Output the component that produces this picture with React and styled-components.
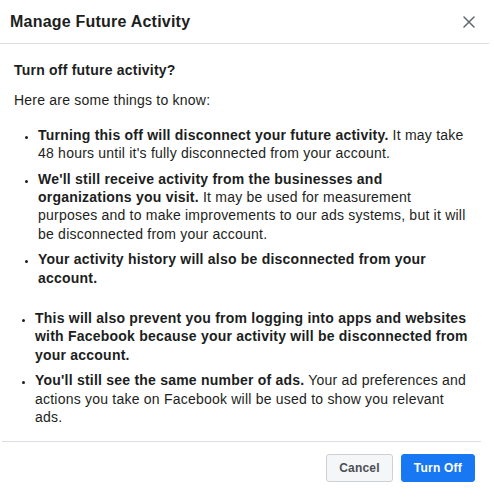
import React from 'react'
import styled, { createGlobalStyle } from 'styled-components'

const GlobalStyle = createGlobalStyle`
	html, body {
		margin: 0;
		padding: 0;
		background: #fff;
	}
	body {
		font-family: 'Liberation Sans', Arial, Helvetica, sans-serif;
		color: #1c1e21;
		letter-spacing: 0.22px;
	}
`

// each item is a list of lines, each line a list of [bold, text] pieces
const items = [
	[
		[['Turning this off will disconnect your future activity.', ' It may take']],
		[['', "48 hours until it's fully disconnected from your account."]],
	],
	[
		[["We'll still receive activity from the businesses and", '']],
		[['organizations you visit.', ' It may be used for measurement']],
		[['', 'purposes and to make improvements to our ads systems, but it will']],
		[['', 'be disconnected from your account.']],
	],
	[
		[['Your activity history will also be disconnected from your', '']],
		[['account.', '']],
	],
]

const moreItems = [
	[
		[['This will also prevent you from logging into apps and websites', '']],
		[['with Facebook because your activity will be disconnected from', '']],
		[['your account.', '']],
	],
	[
		[["You'll still see the same number of ads.", ' Your ad preferences and']],
		[['', 'actions you take on Facebook will be used to show you relevant']],
		[['', 'ads.']],
	],
]

function CloseIcon() {
	return (
		<svg width='12' height='12' viewBox='0 0 12 12'>
			<path
				d='M1 1 L11 11 M11 1 L1 11'
				stroke='#606770'
				strokeWidth='1.5'
				strokeLinecap='round'
			/>
		</svg>
	)
}

function App() {
	const renderItems = (list) =>
		list.map((lines, i) => (
			<Item key={i}>
				{lines.map((line, j) => (
					<Line key={j}>
						{line.map(([bold, text], k) => (
							<React.Fragment key={k}>
								{bold && <strong>{bold}</strong>}
								{text}
							</React.Fragment>
						))}
					</Line>
				))}
			</Item>
		))

	return (
		<>
			<GlobalStyle />
			<Modal>
				<Header>
					<Title>Manage Future Activity</Title>
					<CloseButton aria-label='Close'>
						<CloseIcon />
					</CloseButton>
				</Header>
				<Body>
					<Question>Turn off future activity?</Question>
					<Intro>Here are some things to know:</Intro>
					<List>{renderItems(items)}</List>
					<List $second>{renderItems(moreItems)}</List>
				</Body>
				<Footer>
					<Button>Cancel</Button>
					<Button $primary>Turn Off</Button>
				</Footer>
			</Modal>
		</>
	)
}

export default App

const Modal = styled.div`
	width: 489px;
	background: #fff;
`

const Header = styled.div`
	height: 43px;
	display: flex;
	align-items: center;
	justify-content: space-between;
	padding: 0 14px 0 10px;
	border-bottom: 1px solid #dadde1;
`

const Title = styled.h1`
	margin: 0;
	font-size: 16px;
	font-weight: bold;
	color: #1c1e21;
	line-height: 20px;
`

const CloseButton = styled.button`
	border: none;
	background: none;
	padding: 0;
	width: 12px;
	height: 12px;
	display: flex;
	cursor: pointer;
	margin-top: 1px;
`

const Body = styled.div`
	padding: 17px 0 0 14px;
	font-size: 14px;
	line-height: 18.4px;
`

const Question = styled.div`
	font-weight: bold;
	margin-bottom: 12px;
`

const Intro = styled.div`
	margin-bottom: 16px;
`

const List = styled.ul`
	margin: 0 0 ${(p) => (p.$second ? '14px' : '22px')} 0;
	padding: 0 0 0 ${(p) => (p.$second ? '21px' : '24px')};
	list-style: disc;
`

const Item = styled.li`
	margin-bottom: 7px;
	white-space: nowrap;
	&:last-child {
		margin-bottom: 0;
	}
	&::marker {
		font-size: 11px;
	}
	strong {
		font-weight: bold;
	}
`

const Line = styled.span`
	display: block;
`

const Footer = styled.div`
	width: 479px;
	margin-left: 2px;
	box-sizing: border-box;
	border-top: 1px solid #dadde1;
	display: flex;
	justify-content: flex-end;
	gap: 8px;
	padding: 12px 6px 17px 0;
`

const Button = styled.button`
	height: 28px;
	padding: 0 12px;
	border-radius: 3px;
	font-family: 'Liberation Sans', Arial, Helvetica, sans-serif;
	font-size: 12px;
	font-weight: bold;
	letter-spacing: 0.22px;
	cursor: pointer;
	border: 1px solid ${(p) => (p.$primary ? '#1877f2' : '#ccd0d5')};
	background: ${(p) => (p.$primary ? '#1877f2' : '#f5f6f7')};
	color: ${(p) => (p.$primary ? '#fff' : '#4b4f56')};
`
